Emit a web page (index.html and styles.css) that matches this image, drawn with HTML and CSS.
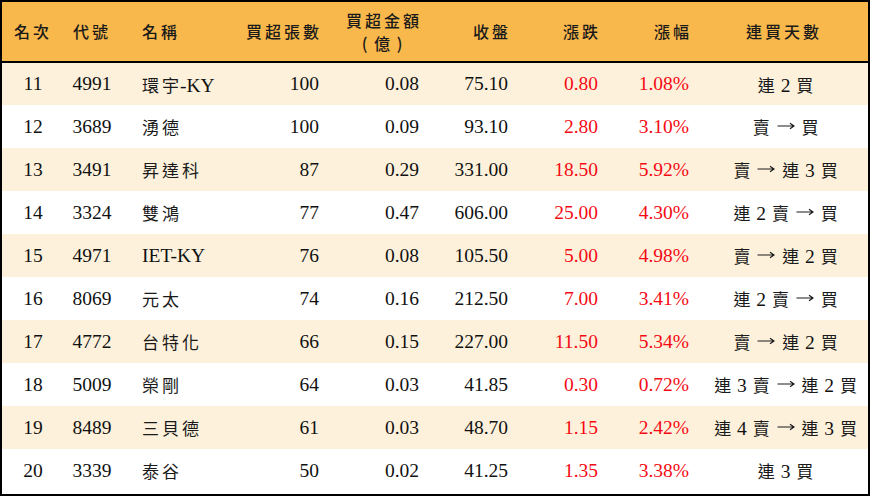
FILE: index.html
```html
<!DOCTYPE html>
<html lang="zh-Hant">
<head>
<meta charset="utf-8">
<link rel="stylesheet" href="styles.css">
</head>
<body>
<div class="frame">
<table class="board">
  <colgroup>
    <col class="c1"><col class="c2"><col class="c3"><col class="c4"><col class="c5">
    <col class="c6"><col class="c7"><col class="c8"><col class="c9">
  </colgroup>
  <thead>
    <tr>
      <th class="ctr">名次</th>
      <th class="ctr">代號</th>
      <th class="lft">名稱</th>
      <th class="rgt">買超張數</th>
      <th class="rgt two"><span class="line">買超金額</span><span class="line unit"><span class="par">(</span>億<span class="par">)</span></span></th>
      <th class="rgt">收盤</th>
      <th class="rgt">漲跌</th>
      <th class="rgt">漲幅</th>
      <th class="ctr">連買天數</th>
    </tr>
  </thead>
  <tbody>
    <tr class="alt"><td class="ctr">11</td><td class="ctr">4991</td><td class="lft"><span class="zh trail">環宇</span>-KY</td><td class="rgt">100</td><td class="rgt">0.08</td><td class="rgt">75.10</td><td class="rgt up">0.80</td><td class="rgt up">1.08%</td><td class="ctr days"><span class="zh">連</span> 2 <span class="zh">買</span></td></tr>
    <tr><td class="ctr">12</td><td class="ctr">3689</td><td class="lft"><span class="zh">湧德</span></td><td class="rgt">100</td><td class="rgt">0.09</td><td class="rgt">93.10</td><td class="rgt up">2.80</td><td class="rgt up">3.10%</td><td class="ctr days"><span class="zh">賣</span> <svg class="arr" viewBox="0 0 18 8" width="18" height="8"><path d="M0.5 4H17M13 1.2L17 4L13 6.8"/></svg> <span class="zh">買</span></td></tr>
    <tr class="alt"><td class="ctr">13</td><td class="ctr">3491</td><td class="lft"><span class="zh">昇達科</span></td><td class="rgt">87</td><td class="rgt">0.29</td><td class="rgt">331.00</td><td class="rgt up">18.50</td><td class="rgt up">5.92%</td><td class="ctr days"><span class="zh">賣</span> <svg class="arr" viewBox="0 0 18 8" width="18" height="8"><path d="M0.5 4H17M13 1.2L17 4L13 6.8"/></svg> <span class="zh">連</span> 3 <span class="zh">買</span></td></tr>
    <tr><td class="ctr">14</td><td class="ctr">3324</td><td class="lft"><span class="zh">雙鴻</span></td><td class="rgt">77</td><td class="rgt">0.47</td><td class="rgt">606.00</td><td class="rgt up">25.00</td><td class="rgt up">4.30%</td><td class="ctr days"><span class="zh">連</span> 2 <span class="zh">賣</span> <svg class="arr" viewBox="0 0 18 8" width="18" height="8"><path d="M0.5 4H17M13 1.2L17 4L13 6.8"/></svg> <span class="zh">買</span></td></tr>
    <tr class="alt"><td class="ctr">15</td><td class="ctr">4971</td><td class="lft">IET-KY</td><td class="rgt">76</td><td class="rgt">0.08</td><td class="rgt">105.50</td><td class="rgt up">5.00</td><td class="rgt up">4.98%</td><td class="ctr days"><span class="zh">賣</span> <svg class="arr" viewBox="0 0 18 8" width="18" height="8"><path d="M0.5 4H17M13 1.2L17 4L13 6.8"/></svg> <span class="zh">連</span> 2 <span class="zh">買</span></td></tr>
    <tr><td class="ctr">16</td><td class="ctr">8069</td><td class="lft"><span class="zh">元太</span></td><td class="rgt">74</td><td class="rgt">0.16</td><td class="rgt">212.50</td><td class="rgt up">7.00</td><td class="rgt up">3.41%</td><td class="ctr days"><span class="zh">連</span> 2 <span class="zh">賣</span> <svg class="arr" viewBox="0 0 18 8" width="18" height="8"><path d="M0.5 4H17M13 1.2L17 4L13 6.8"/></svg> <span class="zh">買</span></td></tr>
    <tr class="alt"><td class="ctr">17</td><td class="ctr">4772</td><td class="lft"><span class="zh">台特化</span></td><td class="rgt">66</td><td class="rgt">0.15</td><td class="rgt">227.00</td><td class="rgt up">11.50</td><td class="rgt up">5.34%</td><td class="ctr days"><span class="zh">賣</span> <svg class="arr" viewBox="0 0 18 8" width="18" height="8"><path d="M0.5 4H17M13 1.2L17 4L13 6.8"/></svg> <span class="zh">連</span> 2 <span class="zh">買</span></td></tr>
    <tr><td class="ctr">18</td><td class="ctr">5009</td><td class="lft"><span class="zh">榮剛</span></td><td class="rgt">64</td><td class="rgt">0.03</td><td class="rgt">41.85</td><td class="rgt up">0.30</td><td class="rgt up">0.72%</td><td class="ctr days"><span class="zh">連</span> 3 <span class="zh">賣</span> <svg class="arr" viewBox="0 0 18 8" width="18" height="8"><path d="M0.5 4H17M13 1.2L17 4L13 6.8"/></svg> <span class="zh">連</span> 2 <span class="zh">買</span></td></tr>
    <tr class="alt"><td class="ctr">19</td><td class="ctr">8489</td><td class="lft"><span class="zh">三貝德</span></td><td class="rgt">61</td><td class="rgt">0.03</td><td class="rgt">48.70</td><td class="rgt up">1.15</td><td class="rgt up">2.42%</td><td class="ctr days"><span class="zh">連</span> 4 <span class="zh">賣</span> <svg class="arr" viewBox="0 0 18 8" width="18" height="8"><path d="M0.5 4H17M13 1.2L17 4L13 6.8"/></svg> <span class="zh">連</span> 3 <span class="zh">買</span></td></tr>
    <tr><td class="ctr">20</td><td class="ctr">3339</td><td class="lft"><span class="zh">泰谷</span></td><td class="rgt">50</td><td class="rgt">0.02</td><td class="rgt">41.25</td><td class="rgt up">1.35</td><td class="rgt up">3.38%</td><td class="ctr days"><span class="zh">連</span> 3 <span class="zh">買</span></td></tr>
  </tbody>
</table>
</div>
</body>
</html>
```

FILE: styles.css
```css
html, body {
  margin: 0;
  padding: 0;
  background: #ffffff;
}

.frame {
  width: 870px;
  height: 496px;
  box-sizing: border-box;
  border: 2px solid #000;
  overflow: hidden;
}

.board {
  width: 866px;
  border-collapse: collapse;
  table-layout: fixed;
  font-family: "Liberation Serif", "Noto Sans CJK TC", serif;
  font-size: 19.5px;
  color: #111;
}

.c1 { width: 62px; }
.c2 { width: 56px; }
.c3 { width: 110px; }
.c4 { width: 100px; }
.c5 { width: 100px; }
.c6 { width: 89px; }
.c7 { width: 90px; }
.c8 { width: 91px; }
.c9 { width: 168px; }

.board thead tr {
  height: 60px;
  background: #f9b84b;
  border-bottom: 2px solid #000;
}

.board th {
  font-family: "Noto Sans CJK TC", sans-serif;
  font-weight: 500;
  font-size: 16px;
  letter-spacing: 3px;
  line-height: 21px;
  padding: 0;
  color: #1a1a1a;
}

.line {
  display: block;
  height: 23px;
  line-height: 23px;
}

.board th.two {
  padding-top: 1px;
}

.unit {
  letter-spacing: 0;
  padding-right: 13px;
}

.par {
  display: inline-block;
  width: 9px;
  margin: 0 5px;
  text-align: center;
}

.board tbody tr {
  height: 43px;
  background: #ffffff;
}

.board tbody tr.alt {
  background: #fdf1dc;
}

.board td {
  padding: 0;
  white-space: nowrap;
}

.zh {
  font-family: "Noto Sans CJK TC", sans-serif;
  font-size: 17px;
  letter-spacing: 3px;
  color: #1a1a1a;
}

.zh.trail {
  margin-right: -2px;
}

.days .zh {
  letter-spacing: 0;
}

.arr {
  display: inline-block;
  vertical-align: 0.22em;
  margin: 0 1px;
  fill: none;
  stroke: #1a1a1a;
  stroke-width: 1.2;
}

.ctr { text-align: center; }
.lft { text-align: left; padding-left: 22px !important; }
.rgt { text-align: right; padding-right: 11px !important; }
.board th.rgt { padding-right: 8px !important; }

.up { color: #f50a14; }

.days {
  word-spacing: 1px;
  padding-left: 3px !important;
}
```
